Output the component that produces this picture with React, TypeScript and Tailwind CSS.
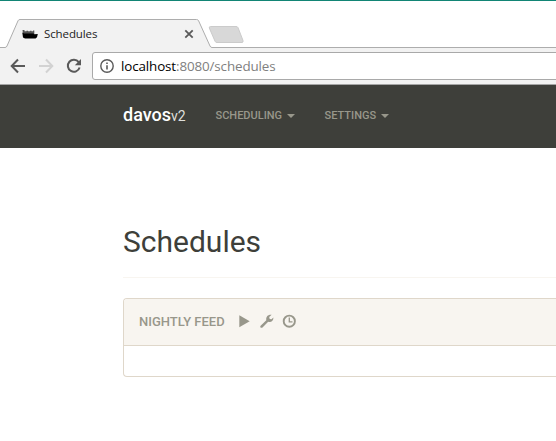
import React from "react";

function TabStrip() {
  return (
    <div className="relative h-[48px] border-t border-[#128575] bg-white">
      <svg className="absolute left-0 top-0" width="556" height="47" viewBox="0 1 556 47">
        <path d="M-2 47.500H5Q6.300 47.500 7 46L18 20.800Q18.600 19.500 20 19.500H196.500Q198 19.500 198.600 20.800L210 46Q210.700 47.500 212 47.500H558V50H-2Z" fill="#f2f2f2" stroke="#adadad" />
        <path d="M210.500 26.500H236Q237.500 26.500 238 27.600L243 40.500Q243.500 42.500 242 42.500H217Q215.500 42.500 215 41.200L209.300 28Q209 26.500 210.500 26.500Z" fill="#d8d8d8" stroke="#cbcbcb" />
        <path d="M22.500 30H24.500V31.300H26.500V30.700H28V31.300H30V30.700H31.500V31.300H33V30.500H34.300V34H23Z" fill="#555" />
        <path d="M22.300 32.500L24 33.500H33.500L34.500 34.200L37.800 34L37 37.300L35.500 38.600H25L23 37.500Z" fill="#000" />
        <path d="M185.300 30.300L192.700 37.700M192.700 30.300L185.300 37.700" stroke="#5a5a5a" strokeWidth="1.800" />
      </svg>
      <div className="relative pl-[44px] pt-[25px] font-['Open_Sans',sans-serif] text-[11.500px] leading-[16px] tracking-[-0.1px] text-[#222]">
        Schedules
      </div>
    </div>
  );
}

function Toolbar() {
  return (
    <div className="flex h-[37px] items-start border-b border-[#a5a5a5] bg-[#f2f2f2] pt-1">
      <svg className="h-7 w-[92px] shrink-0" viewBox="0 52 92 28" fill="none" strokeWidth="2">
        <path d="M25 66H12M18 59.500L11.700 66L18 72.500" stroke="#5a5a5a" />
        <path d="M39 66H52M46 59.500L52.300 66L46 72.500" stroke="#d2d2d2" />
        <path d="M78.700 62.200A6 6 0 1 0 79.600 67.500" stroke="#5a5a5a" />
        <path d="M81 59V65.200H74.800Z" fill="#5a5a5a" />
      </svg>
      <div className="flex h-7 w-[480px] shrink-0 items-center rounded-[3px] border border-[#a9a9a9] bg-white pl-[7px]">
        <svg className="h-[14px] w-[14px]" viewBox="0 0 14 14" fill="none" stroke="#5a5a5a">
          <circle cx="7" cy="7" r="6.200" strokeWidth="1.400" />
          <path d="M7 6.200V10.500M7 3.500V5" strokeWidth="1.600" />
        </svg>
        <span className="ml-[7px] whitespace-nowrap font-['Open_Sans',sans-serif] text-[13.400px] leading-5 tracking-[-0.120px] text-[#808080]">
          <span className="text-black">localhost</span>:8080/schedules
        </span>
      </div>
    </div>
  );
}

function MenuItem({ label }: { label: string }) {
  return (
    <a className="flex items-center text-[11px] font-medium leading-5 text-[#98978b]">
      {label}
      <span className="ml-[5px] border-x-4 border-t-4 border-x-transparent border-t-[#98978b]" />
    </a>
  );
}

function Navbar() {
  return (
    <nav className="flex h-[63px] items-center bg-[#3e3f3a] pl-[123px]">
      <div className="w-[92.500px] whitespace-nowrap pb-[3px] text-[18px] font-medium leading-5 text-white">
        davos<span className="text-[14px] font-normal text-[#dfdfdc]">v2</span>
      </div>
      <div className="flex gap-[29.500px] pb-px">
        <MenuItem label="SCHEDULING" />
        <MenuItem label="SETTINGS" />
      </div>
    </nav>
  );
}

function SchedulePanel() {
  return (
    <section className="mt-5 h-[79px] rounded-l border border-r-0 border-[#dfd7ca] bg-white">
      <header className="flex h-[47px] items-center rounded-tl-[3px] border-b border-[#dfd7ca] bg-[#f8f5f0] pl-[15px] text-[#98978b]">
        <span className="w-[97px] whitespace-nowrap pb-px text-[13px] font-medium leading-5">NIGHTLY FEED</span>
        <svg className="h-4 w-[80px]" viewBox="236 313.500 80 16">
          <path d="M239.300 314.700L249.700 320.700L239.300 326.700Z" fill="currentColor" />
          <path d="M260.600 325.200L266.300 319.700C265.800 316.200 268 313.900 271.600 314.300L269.200 316.500L269.700 318.500L271.500 318.800L273.400 317C273.700 320.200 271 322.200 268.200 321.300L262.500 327C261.200 328 259.500 326.500 260.600 325.200Z" fill="currentColor" />
          <circle cx="289.300" cy="320.700" r="5.600" fill="none" stroke="currentColor" strokeWidth="1.900" />
          <path d="M289.300 317V321.300H292.500" fill="none" stroke="currentColor" strokeWidth="1.300" />
        </svg>
      </header>
    </section>
  );
}

export default function App() {
  return (
    <div className="h-[441px] w-[556px] overflow-hidden bg-white font-['Roboto',sans-serif]">
      <TabStrip />
      <Toolbar />
      <Navbar />
      <main className="pl-[123px] pt-[73px]">
        <h1 className="h-[57px] border-b border-[#f8f5f0] text-[30px] font-normal leading-[42px] text-[#3e3f3a]">Schedules</h1>
        <SchedulePanel />
      </main>
    </div>
  );
}
